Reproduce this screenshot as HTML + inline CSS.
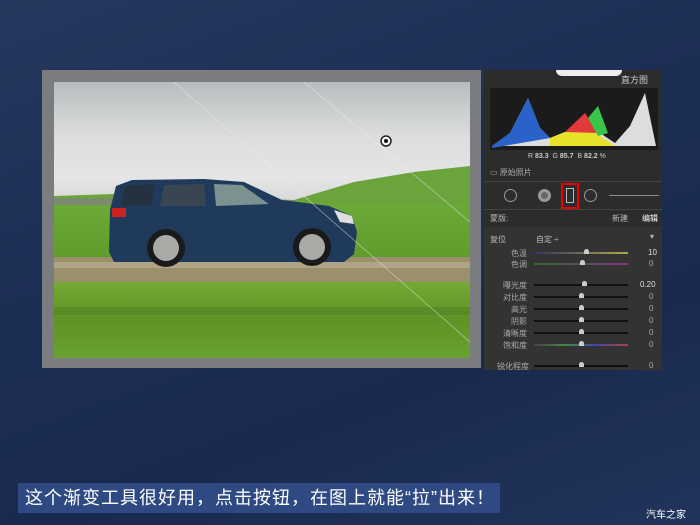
<!DOCTYPE html><html><head><meta charset="utf-8"><style>
*{margin:0;padding:0;box-sizing:border-box}
body{width:700px;height:525px;overflow:hidden;background:#1f3159;font-family:"Liberation Sans","Noto Sans CJK SC",sans-serif;position:relative}
.bg{position:absolute;inset:0;background:linear-gradient(160deg,#26385f 0%,#1d2e55 40%,#1a2a4e 70%,#22345c 100%)}
.frame{position:absolute;left:42px;top:70px;width:439px;height:298px;background:#7b7c80}
.photo{position:absolute;left:54px;top:82px;width:416px;height:276px;overflow:hidden;
background:linear-gradient(180deg,#b9bcbe 0%,#dcdedd 20%,#e4e5e4 35%,#cfd3d2 48%,#bfc5c3 100%)}
.panel{position:absolute;left:484px;top:70px;width:178px;height:300px;background:#2c2c2c;color:#bbb;font-size:8px}
.lbl{position:absolute;font-size:8px;color:#aaa}
.sl{position:absolute;left:534px;width:94px;height:2px;background:#111}
.kn{position:absolute;width:5px;height:5px;background:#ccc;border-radius:50% 50% 0 0}
.cap{position:absolute;left:18px;top:483px;width:482px;height:30px;background:#2f4a82;color:#fff;font-size:18px;line-height:30px;padding-left:7px;white-space:nowrap;letter-spacing:1px}
</style></head><body><div class="bg"></div>
<div class="frame"></div>
<div class="photo">
<svg style="position:absolute;left:0;top:0" width="416" height="276">
<defs><linearGradient id="g1" x1="0" y1="0" x2="0" y2="1"><stop offset="0" stop-color="#6aa838"/><stop offset="1" stop-color="#5f9c2c"/></linearGradient>
<linearGradient id="g2" x1="0" y1="0" x2="0" y2="1"><stop offset="0" stop-color="#74a934"/><stop offset=".5" stop-color="#5e9326"/><stop offset="1" stop-color="#6aa232"/></linearGradient></defs>
<path d="M0 114 L60 112 L240 118 L300 100 L360 90 L416 84 L416 180 L0 180Z" fill="#6aa43a"/>
<path d="M0 116 L0 123 L240 124 L240 118 Z" fill="#7d8a72"/>
<rect x="0" y="123" width="416" height="55" fill="url(#g1)"/>
<rect x="0" y="175" width="416" height="26" fill="#9c8f6c"/>
<rect x="0" y="180" width="416" height="6" fill="#b0a486"/>
<rect x="0" y="200" width="416" height="76" fill="url(#g2)"/>
<rect x="0" y="225" width="416" height="8" fill="#4f7d22" opacity=".5"/>
<path d="M56 128 L62 104 L78 98 L150 97 L190 100 L228 118 L275 124 L298 134 L303 150 L300 172 L290 180 L60 180 L55 170Z" fill="#1f3a5a"/>
<path d="M72 104 L100 102 L98 123 L66 124Z" fill="#243240"/>
<path d="M110 103 L150 102 L152 124 L106 124Z" fill="#3a4552"/>
<path d="M160 102 L188 103 L215 122 L162 124Z" fill="#7c9290"/>
<rect x="58" y="126" width="14" height="9" fill="#c22"/>
<circle cx="112" cy="166" r="19" fill="#1a1a1a"/><circle cx="112" cy="166" r="13" fill="#a9aaa5"/>
<circle cx="258" cy="165" r="19" fill="#1a1a1a"/><circle cx="258" cy="165" r="13" fill="#a9aaa5"/>
<path d="M280 128 L298 134 L300 142 L286 140Z" fill="#ddd"/>
<line x1="120" y1="0" x2="416" y2="260" stroke="#eee" stroke-width="0.7" opacity=".6"/><line x1="250" y1="0" x2="416" y2="140" stroke="#eee" stroke-width="0.7" opacity=".6"/><circle cx="332" cy="59" r="5" fill="#fff" stroke="#222" stroke-width="1.5"/><circle cx="332" cy="59" r="2" fill="#111"/></svg>
</div>
<div class="panel">
<div style="position:absolute;left:72px;top:0;width:66px;height:6px;background:#eee;border-radius:0 0 20px 20px"></div>
<div style="position:absolute;right:14px;top:3px;font-size:9px;color:#ccc">直方图</div>
<div style="position:absolute;left:6px;top:18px;width:168px;height:62px;background:#1b1b1b">
<svg width="168" height="62"><path d="M2 58 L20 45 L38 10 L50 40 L60 50 L80 42 L100 30 L110 45 L125 55 L140 38 L155 5 L166 58Z" fill="#ddd"/>
<path d="M2 58 L20 45 L38 10 L50 40 L60 50 L2 60Z" fill="#2a62c9"/>
<path d="M60 50 L80 42 L95 40 L110 48 L125 58 L60 58Z" fill="#e8e12a"/>
<path d="M75 44 L95 25 L108 45 Z" fill="#e03a3a"/><path d="M98 30 L108 18 L118 45 L108 48Z" fill="#3ac44a"/></svg></div>
<div style="position:absolute;left:44px;top:83px;font-size:7px;color:#ccc">R <b>83.3</b> &nbsp;G <b>85.7</b> &nbsp;B <b>82.2</b> %</div>
<div style="position:absolute;left:6px;top:97px;font-size:8px;color:#aaa">▭ 原始照片</div>
<div style="position:absolute;left:0;top:111px;width:178px;height:1px;background:#444"></div>
<div style="position:absolute;left:20px;top:119px;width:13px;height:13px;border:1px solid #999;border-radius:50%"></div>
<div style="position:absolute;left:54px;top:119px;width:13px;height:13px;background:#666;border:3px solid #999;border-radius:50%"></div>
<div style="position:absolute;left:77px;top:113px;width:18px;height:26px;border:2px solid #e00"></div>
<div style="position:absolute;left:82px;top:118px;width:8px;height:15px;border:1px solid #bbb"></div>
<div style="position:absolute;left:100px;top:119px;width:13px;height:13px;border:1px solid #999;border-radius:50%"></div>
<div style="position:absolute;left:125px;top:125px;width:50px;height:1px;background:#888"></div>
<div style="position:absolute;left:0;top:139px;width:178px;height:1px;background:#444"></div>
<div style="position:absolute;left:6px;top:143px;font-size:8px">蒙版:</div>
<div style="position:absolute;left:128px;top:143px;font-size:8px">新建</div>
<div style="position:absolute;left:158px;top:143px;font-size:8px;color:#fff">编辑</div>
<div style="position:absolute;left:0;top:157px;width:178px;height:143px;background:#333"></div>
<div style="position:absolute;left:6px;top:164px">复位</div><div style="position:absolute;left:52px;top:164px">自定 ÷</div><div style="position:absolute;left:166px;top:162px">▾</div>
</div>
<div class="lbl" style="left:511px;top:248px">色温</div><div class="sl" style="top:252px;background:linear-gradient(90deg,#336,#aa4)"></div><div class="lbl" style="left:648px;top:248px;color:#ddd">10</div>
<div class="lbl" style="left:511px;top:259px">色调</div><div class="sl" style="top:263px;background:linear-gradient(90deg,#363,#838)"></div><div class="lbl" style="left:649px;top:259px">0</div>
<div class="lbl" style="left:503px;top:280px">曝光度</div><div class="sl" style="top:284px"></div><div class="lbl" style="left:640px;top:280px;color:#ddd">0.20</div>
<div class="lbl" style="left:503px;top:292px">对比度</div><div class="sl" style="top:296px"></div><div class="lbl" style="left:649px;top:292px">0</div>
<div class="lbl" style="left:511px;top:304px">高光</div><div class="sl" style="top:308px"></div><div class="lbl" style="left:649px;top:304px">0</div>
<div class="lbl" style="left:511px;top:316px">阴影</div><div class="sl" style="top:320px"></div><div class="lbl" style="left:649px;top:316px">0</div>
<div class="lbl" style="left:503px;top:328px">清晰度</div><div class="sl" style="top:332px"></div><div class="lbl" style="left:649px;top:328px">0</div>
<div class="lbl" style="left:503px;top:340px">饱和度</div><div class="sl" style="top:344px;background:linear-gradient(90deg,#444,#484,#44a,#a44)"></div><div class="lbl" style="left:649px;top:340px">0</div>
<div class="lbl" style="left:497px;top:361px">锐化程度</div><div class="sl" style="top:365px"></div><div class="lbl" style="left:649px;top:361px">0</div>
<div class="kn" style="left:584px;top:249px"></div><div class="kn" style="left:580px;top:260px"></div><div class="kn" style="left:582px;top:281px"></div><div class="kn" style="left:579px;top:293px"></div><div class="kn" style="left:579px;top:305px"></div><div class="kn" style="left:579px;top:317px"></div><div class="kn" style="left:579px;top:329px"></div><div class="kn" style="left:579px;top:341px"></div><div class="kn" style="left:579px;top:362px"></div>
<div class="cap">这个渐变工具很好用，点击按钮，在图上就能“拉”出来！</div>
<div style="position:absolute;left:646px;top:506px;font-size:10px;color:#fff">汽车之家</div>
</body></html>
